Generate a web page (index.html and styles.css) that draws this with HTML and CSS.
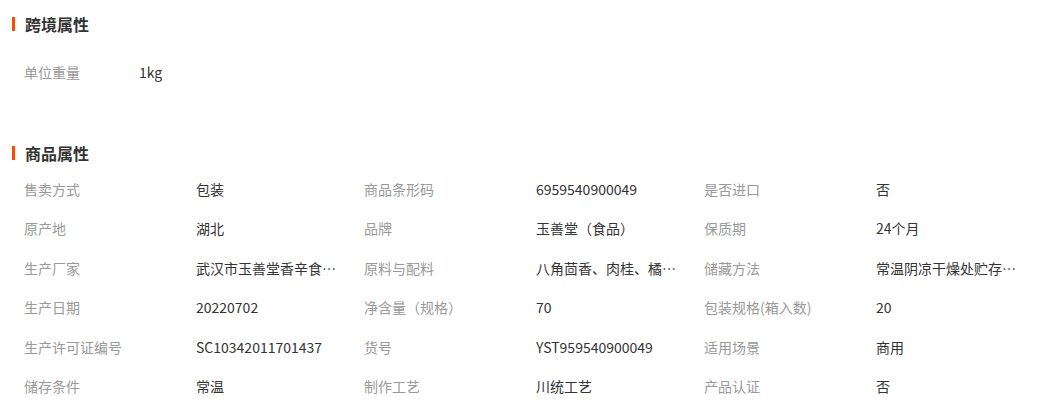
FILE: index.html
```html
<!DOCTYPE html>
<html>

<head>
    <meta charset="utf-8">
    <link rel="stylesheet" href="styles.css">
</head>

<body>

    <div class="section">
        <h3 class="section-title">跨境属性</h3>
        <div class="kv-row">
            <span class="kv-label short">单位重量</span>
            <span class="kv-value">1kg</span>
        </div>
    </div>

    <div class="section second">
        <h3 class="section-title">商品属性</h3>
        <div class="attr-grid">
            <div class="kv-row"><span class="kv-label">售卖方式</span><span class="kv-value">包装</span></div>
            <div class="kv-row"><span class="kv-label">商品条形码</span><span class="kv-value">6959540900049</span></div>
            <div class="kv-row"><span class="kv-label">是否进口</span><span class="kv-value">否</span></div>

            <div class="kv-row"><span class="kv-label">原产地</span><span class="kv-value">湖北</span></div>
            <div class="kv-row"><span class="kv-label">品牌</span><span class="kv-value">玉善堂（食品）</span></div>
            <div class="kv-row"><span class="kv-label">保质期</span><span class="kv-value">24个月</span></div>

            <div class="kv-row"><span class="kv-label">生产厂家</span><span class="kv-value">武汉市玉善堂香辛食品厂</span></div>
            <div class="kv-row"><span class="kv-label">原料与配料</span><span class="kv-value">八角茴香、肉桂、橘皮等</span></div>
            <div class="kv-row"><span class="kv-label">储藏方法</span><span class="kv-value">常温阴凉干燥处贮存为宜</span></div>

            <div class="kv-row"><span class="kv-label">生产日期</span><span class="kv-value">20220702</span></div>
            <div class="kv-row"><span class="kv-label">净含量（规格）</span><span class="kv-value">70</span></div>
            <div class="kv-row"><span class="kv-label">包装规格(箱入数)</span><span class="kv-value">20</span></div>

            <div class="kv-row"><span class="kv-label">生产许可证编号</span><span class="kv-value">SC10342011701437</span></div>
            <div class="kv-row"><span class="kv-label">货号</span><span class="kv-value">YST959540900049</span></div>
            <div class="kv-row"><span class="kv-label">适用场景</span><span class="kv-value">商用</span></div>

            <div class="kv-row"><span class="kv-label">储存条件</span><span class="kv-value">常温</span></div>
            <div class="kv-row"><span class="kv-label">制作工艺</span><span class="kv-value">川统工艺</span></div>
            <div class="kv-row"><span class="kv-label">产品认证</span><span class="kv-value">否</span></div>
        </div>
    </div>

</body>

</html>
```

FILE: styles.css
```css
html,
body {
    margin: 0;
    padding: 0;
    background: #fff;
    font-family: "Noto Sans CJK SC", "Liberation Sans", sans-serif;
    font-size: 14px;
    color: #333;
}

.section {
    padding-top: 12px;
}

.section.second {
    padding-top: 49px;
}

.section-title {
    margin: 0;
    padding-left: 12px;
    height: 24px;
    line-height: 24px;
    font-size: 16px;
    font-weight: bold;
    color: #333;
    display: flex;
    align-items: center;
}

.section-title::before {
    content: "";
    display: inline-block;
    width: 3px;
    height: 14px;
    margin-right: 10px;
    background-color: #ff4a00;
}

.section > .kv-row {
    margin-top: 16px;
    padding-left: 24px;
}

.kv-row {
    display: flex;
    height: 40px;
    line-height: 40px;
    white-space: nowrap;
}

.kv-label {
    width: 172px;
    flex-shrink: 0;
    color: #999;
}

.kv-label.short {
    width: 115px;
}

.kv-value {
    max-width: 140px;
    overflow: hidden;
    text-overflow: ellipsis;
    color: #333;
}

.attr-grid {
    display: grid;
    grid-template-columns: repeat(3, 340px);
    grid-auto-rows: 39.4px;
    padding-left: 24px;
    margin-top: 5px;
}

.attr-grid .kv-row {
    height: 39.4px;
    line-height: 39.4px;
}
```
